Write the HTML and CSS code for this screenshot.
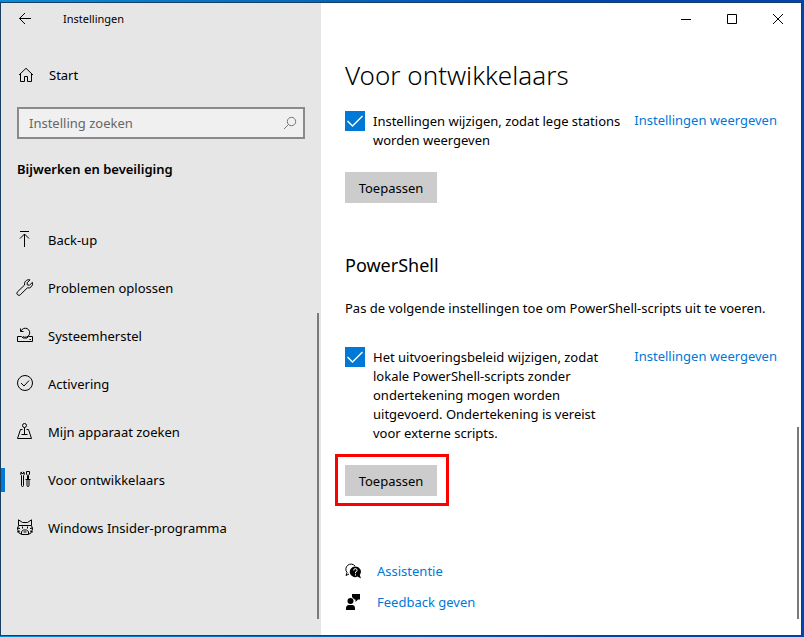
FILE: index.html
```html
<!DOCTYPE html>
<html lang="nl">
<head>
  <meta charset="utf-8">
  <title>Instellingen</title>
  <link rel="stylesheet" href="styles.css">
</head>
<body>
  <div class="window">
    <aside class="sidebar">
      <header class="titlebar">
        <button class="back" aria-label="Terug">
          <svg width="14" height="14" viewBox="0 0 14 14"><path d="M13 6.500H1.500M7 1L1.500 6.500L7 12"/></svg>
        </button>
        <span class="app-name">Instellingen</span>
      </header>

      <a href="#" class="home">
        <svg width="16" height="16" viewBox="0 0 16 16"><path d="M1 8L8 1.300L15 8M2.500 7V14.500H6.500V9.500H9.500V14.500H13.500V7"/></svg>
        <span>Start</span>
      </a>

      <form class="search">
        <input type="text" placeholder="Instelling zoeken" aria-label="Instelling zoeken">
        <svg width="14" height="14" viewBox="0 0 14 14"><circle cx="8.500" cy="5.500" r="4.200"/><path d="M5.500 8.500L1 13"/></svg>
      </form>

      <h2 class="section">Bijwerken en beveiliging</h2>

      <nav class="nav">
        <a href="#">
          <svg width="18" height="18" viewBox="0 0 18 18"><path d="M4 .5H13M8.500 16V3M4 7.500L8.500 3L13 7.500"/></svg>
          <span>Back-up</span>
        </a>
        <a href="#">
          <svg width="18" height="18" viewBox="0 0 18 18"><path d="M14 .9A4.300 4.300 0 0 0 8.600 6L1.500 12.800A1.900 1.900 0 0 0 4.400 15.700L11.300 8.900A4.300 4.300 0 0 0 16.400 3.400L13.500 6.200L11.300 5.900L11.100 3.800Z"/></svg>
          <span>Problemen oplossen</span>
        </a>
        <a href="#">
          <svg width="18" height="18" viewBox="0 0 18 18"><path d="M5.500 9.500H1.500V14.500H16.500V9.500H12.500M13.500 12.500H15M4.500 1.500V4.500H7.500M5 4.200A4.500 4.500 0 1 1 6.800 9.500M5.500 9.500L7 11H11L12.500 9.500"/></svg>
          <span>Systeemherstel</span>
        </a>
        <a href="#">
          <svg width="18" height="18" viewBox="0 0 18 18"><circle cx="9" cy="8" r="7.500"/><path d="M5 8L8 11L13 5.500"/></svg>
          <span>Activering</span>
        </a>
        <a href="#">
          <svg width="18" height="18" viewBox="0 0 18 18"><circle cx="8.500" cy="2.500" r="2"/><path d="M8.500 4.500V11.500M6.500 6.500H4.500L1.500 15.500H15.500L12.500 6.500H10.500M5.500 11.500H11.500"/></svg>
          <span>Mijn apparaat zoeken</span>
        </a>
        <a href="#" class="active">
          <svg width="18" height="18" viewBox="0 0 18 18"><path d="M5.500 .9A2.200 2.200 0 0 0 5.500 4.500V14.500A1 1 0 0 0 7.500 14.500V4.500A2.200 2.200 0 0 0 7.500 .9V2.500H5.500ZM10.500 .5H13.500V3L12.500 4.500V8.500H11.500V4.500L10.500 3ZM9.500 8.500H14.500M11 8.500V14.500A1 1 0 0 0 13 14.500V8.500"/></svg>
          <span>Voor ontwikkelaars</span>
        </a>
        <a href="#">
          <svg width="18" height="18" viewBox="0 0 18 18"><path d="M2.500 6V.8L6.500 3.500H11.500L15.500 .8V6M2.500 6.500H15.500M2.500 6.500L1.500 10L3 14L6 15.500H12L15 14L16.500 10L15.500 6.500M1 9L4 9.500M1 13L4 12M17 9L14 9.500M17 13L14 12M6.500 7.500V9.500M11.500 7.500V9.500M5.500 15V12.500L7.500 11H10.500L12.500 12.500V15M7.500 13H10.500"/></svg>
          <span>Windows Insider-programma</span>
        </a>
      </nav>
      <div class="thumb thumb-side"></div>
    </aside>

    <main class="content">
      <header class="caption">
        <button aria-label="Minimaliseren"><svg width="12" height="12" viewBox="0 0 12 12"><path d="M1 6.500H11"/></svg></button>
        <button aria-label="Maximaliseren"><svg width="12" height="12" viewBox="0 0 12 12"><path d="M1.500 1.500H10.500V10.500H1.500Z"/></svg></button>
        <button aria-label="Sluiten"><svg width="12" height="12" viewBox="0 0 12 12"><path d="M1 1L11 11M11 1L1 11"/></svg></button>
      </header>

      <div class="page">
        <h1>Voor ontwikkelaars</h1>

        <div class="setting">
          <input type="checkbox" id="drives" checked>
          <label for="drives">Instellingen wijzigen, zodat lege stations worden weergeven</label>
          <a href="#">Instellingen weergeven</a>
        </div>
        <div class="action">
          <button class="apply">Toepassen</button>
        </div>

        <h2>PowerShell</h2>
        <p>Pas de volgende instellingen toe om PowerShell-scripts uit te voeren.</p>

        <div class="setting">
          <input type="checkbox" id="policy" checked>
          <label for="policy">Het uitvoeringsbeleid wijzigen, zodat lokale PowerShell-scripts zonder ondertekening mogen worden uitgevoerd. Ondertekening is vereist voor externe scripts.</label>
          <a href="#">Instellingen weergeven</a>
        </div>
        <div class="action marked">
          <button class="apply">Toepassen</button>
        </div>

        <ul class="help">
          <li>
            <svg width="16" height="16" viewBox="0 0 16 16"><path class="line" d="M4 11L1 12.500L2 9.500A5 5 0 1 1 10 3"/><path d="M10.300 3.500A5.300 5.300 0 1 0 12.500 13.500L16 15.500L14.800 12A5.300 5.300 0 0 0 10.300 3.500Z"/><path class="mark" d="M8.700 7.500A1.700 1.700 0 1 1 10.500 9V10.300M10.500 11.300V12.500"/></svg>
            <a href="#">Assistentie</a>
          </li>
          <li>
            <svg width="16" height="16" viewBox="0 0 16 16"><circle cx="5.500" cy="7" r="3"/><path d="M1 16V14A3.300 3.300 0 0 1 4 11H7A3.300 3.300 0 0 1 10 14V16ZM7 0H15V5.500H13L10.500 8V5.500H9.500L7 3Z"/></svg>
            <a href="#">Feedback geven</a>
          </li>
        </ul>
      </div>
      <div class="thumb thumb-main"></div>
    </main>
  </div>
</body>
</html>
```
FILE: styles.css
```css
* {
  box-sizing: border-box;
}

body {
  margin: 0;
  height: 100vh;
  display: flex;
  padding: 2px 2px 1px 0;
  background: linear-gradient(90deg, #0a8ad6, #0046ae 75%);
  font-family: "Noto Sans", "Open Sans", sans-serif;
  font-size: 13px;
  line-height: 18px;
  color: #000;
}

a {
  color: #0078d7;
  text-decoration: none;
}

h1, h2, p, ul {
  margin: 0;
  padding: 0;
  font-weight: 400;
}

button {
  border: 0;
  padding: 0;
  background: none;
  font: inherit;
  color: inherit;
}

svg {
  flex: none;
  fill: none;
  stroke: #000;
}

.window {
  flex: 1;
  display: flex;
  border: 1px solid #163f63;
  background: #fff;
}

/* left pane */
.sidebar {
  position: relative;
  flex: 0 0 320px;
  background: #e6e6e6;
}

.titlebar {
  display: flex;
  align-items: center;
  height: 32px;
  font-size: 11px;
}

.back {
  display: flex;
  justify-content: center;
  width: 48px;
}

.app-name {
  margin-left: 14px;
}

.home {
  display: flex;
  align-items: center;
  gap: 15px;
  height: 48px;
  margin-top: 16px;
  padding-left: 17px;
  color: #000;
}

.search {
  display: flex;
  align-items: center;
  height: 32px;
  margin: 8px 16px 0;
  padding: 0 6px 0 10px;
  border: 2px solid #8a8a8a;
  background: #f0f0f0;
}

.search input {
  flex: 1;
  min-width: 0;
  border: 0;
  padding: 0;
  outline: 0;
  background: none;
  font: inherit;
}

.search input::placeholder {
  color: #666;
}

.search svg {
  stroke: #777;
}

.section {
  margin: 21px 16px 0;
  font-size: 13px;
  font-weight: 600;
}

.nav {
  margin-top: 38px;
}

.nav a {
  display: flex;
  align-items: center;
  gap: 14px;
  height: 48px;
  padding-left: 15px;
  color: #000;
}

.nav .active {
  padding-left: 0;
}

.nav .active::before {
  content: "";
  width: 4px;
  height: 24px;
  margin-right: -3px;
  background: #0078d7;
}

/* overlay scrollbar thumbs */
.thumb {
  position: absolute;
  bottom: 16px;
  width: 2px;
  background: #7a7a7a;
}

.thumb-side {
  right: 2px;
  height: 306px;
}

.thumb-main {
  right: 2px;
  height: 192px;
}

/* right pane */
.content {
  position: relative;
  flex: 1;
  min-width: 0;
}

.caption {
  display: flex;
  justify-content: flex-end;
}

.caption button {
  display: flex;
  align-items: center;
  justify-content: center;
  width: 46px;
  height: 32px;
}

.page {
  padding: 20px 24px 0;
}

.page h1 {
  font-size: 26px;
  font-weight: 300;
  line-height: 40px;
}

.page h2 {
  margin-top: 48px;
  font-size: 18px;
  line-height: 28px;
}

.page p {
  margin-top: 20px;
}

.setting {
  display: grid;
  grid-template-columns: 20px 1fr auto;
  column-gap: 8px;
  align-items: start;
  margin-top: 16px;
}

.page p + .setting {
  margin-top: 30px;
}

.setting input {
  appearance: none;
  width: 20px;
  height: 20px;
  margin: 0;
  background: #0078d7;
}

.setting input:checked {
  background: #0078d7 url("data:image/svg+xml,%3Csvg xmlns='http://www.w3.org/2000/svg' viewBox='0 0 20 20'%3E%3Cpath d='M2.500 10L7.500 15L17.500 5' fill='none' stroke='white' stroke-width='1.400'/%3E%3C/svg%3E");
}

.setting label {
  padding-top: 1px;
  line-height: 19px;
}

.action {
  position: relative;
  width: 92px;
  margin-top: 22px;
}

.apply {
  display: block;
  width: 100%;
  height: 31px;
  background: #ccc;
}

.marked::after {
  content: "";
  position: absolute;
  inset: -11px -12px -10px -10px;
  border: 3px solid #f00;
}

.help {
  margin-top: 59px;
  list-style: none;
}

.help li {
  display: flex;
  align-items: center;
  gap: 16px;
  height: 31px;
}

.help svg {
  fill: #000;
  stroke: none;
}

.help .line {
  fill: none;
  stroke: #000;
}

.help .mark {
  fill: none;
  stroke: #fff;
}
```
